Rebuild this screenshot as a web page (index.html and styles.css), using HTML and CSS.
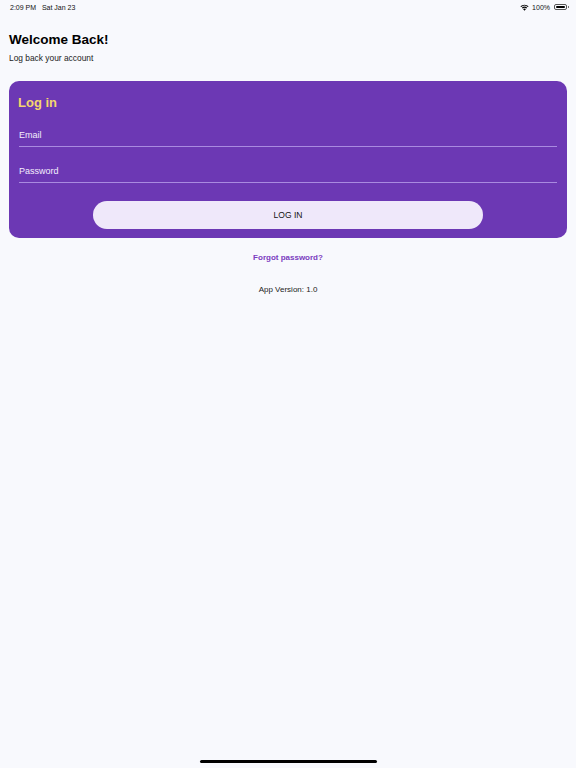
FILE: index.html
```html
<!DOCTYPE html>
<html lang="en">
<head>
    <meta charset="UTF-8">
    <meta name="viewport" content="width=device-width, initial-scale=1.0">
    <title>Log in</title>
    <link rel="stylesheet" href="styles.css">
</head>
<body>
    <!-- Status bar -->
    <div class="status-bar">
        <span class="time">2:09 PM&nbsp;&nbsp;&nbsp;Sat Jan 23</span>
        <span class="status-right">
            <svg class="wifi" width="9" height="7" viewBox="0 0 18 13">
                <path d="M9 13 L6 9.6 A4.5 4.5 0 0 1 12 9.6 Z" fill="#000"/>
                <path d="M3.6 7 A8 8 0 0 1 14.4 7 L12.8 8.7 A5.7 5.7 0 0 0 5.2 8.7 Z" fill="#000"/>
                <path d="M0.8 4 A12 12 0 0 1 17.2 4 L15.6 5.7 A9.7 9.7 0 0 0 2.4 5.7 Z" fill="#000"/>
            </svg>
            100%
            <span class="battery"><span class="battery-fill"></span></span>
        </span>
    </div>

    <div class="header">
        <h1>Welcome Back!</h1>
        <p>Log back your account</p>
    </div>

    <div class="card">
        <h2>Log in</h2>
        <label class="field">
            <input type="email" placeholder="Email">
        </label>
        <label class="field">
            <input type="password" placeholder="Password">
        </label>
        <div class="actions">
            <button type="button" class="login-button">LOG IN</button>
        </div>
    </div>

    <a href="#" class="forgot">Forgot password?</a>
    <p class="version">App Version: 1.0</p>

    <div class="home-indicator"></div>
</body>
</html>
```

FILE: styles.css
```css
* {
    box-sizing: border-box;
}
html, body {
    height: 100%;
}
body {
    margin: 0;
    font-family: "Liberation Sans", Arial, sans-serif;
    background-color: #f8f9fd;
    color: #000;
    display: flex;
    flex-direction: column;
}
.status-bar {
    display: flex;
    justify-content: space-between;
    align-items: center;
    height: 14px;
    padding: 0 9px 0 10px;
    font-size: 7px;
    color: #111;
}
.status-right {
    display: flex;
    align-items: center;
    gap: 3px;
}
.battery {
    display: inline-block;
    width: 13px;
    height: 6px;
    border: 1px solid #555;
    border-radius: 2px;
    padding: 1px;
    position: relative;
    margin-left: 1px;
}
.battery::after {
    content: "";
    position: absolute;
    right: -3px;
    top: 1px;
    width: 1px;
    height: 2px;
    background: #777;
}
.battery-fill {
    display: block;
    width: 100%;
    height: 100%;
    background: #000;
    border-radius: 1px;
}
.header {
    padding: 17px 9px 0;
}
.header h1 {
    margin: 0;
    font-size: 13.5px;
    font-weight: bold;
    line-height: 18px;
}
.header p {
    margin: 4px 0 0;
    font-size: 8.4px;
    color: #222;
    line-height: 10px;
}
.card {
    margin: 18px 9px 0;
    background-color: #6c38b4;
    border-radius: 10px;
    padding: 14px 10px 9px;
}
.card h2 {
    margin: 0 0 0 -1px;
    font-size: 13px;
    color: #f4d56e;
    font-weight: bold;
    line-height: 16px;
}
.field {
    display: block;
    border-bottom: 1.5px solid #a98ae0;
    margin-top: 13px;
}
.field + .field {
    margin-top: 13px;
}
.field input {
    width: 100%;
    height: 20px;
    background: transparent;
    border: none;
    outline: none;
    padding: 4px 0 6px;
    font-family: inherit;
    font-size: 9px;
    line-height: 10px;
    color: #fff;
}
.field input::placeholder {
    color: #f3eefc;
}
.actions {
    display: flex;
    justify-content: center;
    margin-top: 18px;
}
.login-button {
    width: 390px;
    height: 28px;
    border: none;
    border-radius: 14px;
    background-color: #efe8fa;
    font-family: inherit;
    font-size: 8.5px;
    color: #111;
    cursor: pointer;
}
.forgot {
    display: block;
    text-align: center;
    margin-top: 15px;
    font-size: 8px;
    line-height: 10px;
    font-weight: bold;
    color: #7b3cc0;
    text-decoration: none;
}
.version {
    text-align: center;
    margin: 22px 0 0;
    font-size: 8px;
    line-height: 10px;
    color: #222;
}
.home-indicator {
    margin: auto auto 5px;
    width: 177px;
    height: 3px;
    border-radius: 2px;
    background: #000;
}
```
